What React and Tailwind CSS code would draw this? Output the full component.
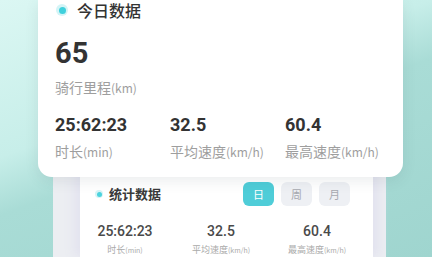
import React from 'react';

const num = { fontFamily: 'Roboto, "Noto Sans", sans-serif' };
const cjk = { fontFamily: '"Noto Sans CJK SC", "Noto Sans", sans-serif' };

const todayStats = [
  { value: '25:62:23', label: '时长', unit: '(min)' },
  { value: '32.5', label: '平均速度', unit: '(km/h)' },
  { value: '60.4', label: '最高速度', unit: '(km/h)' },
];

const Dot = ({ size = 'lg' }) =>
  size === 'lg' ? (
    <span className="flex items-center justify-center w-[12px] h-[12px] rounded-full bg-[#d3f4f6]">
      <span className="w-[7px] h-[7px] rounded-full bg-[#3fd0dc]" />
    </span>
  ) : (
    <span className="flex items-center justify-center w-[8px] h-[8px] rounded-full bg-[#d6f4f6]">
      <span className="w-[5px] h-[5px] rounded-full bg-[#4cd3de]" />
    </span>
  );

export default function App() {
  return (
    <div className="relative w-[432px] h-[257px] overflow-hidden bg-[linear-gradient(160deg,#dbf7f3_0%,#c7eee9_38%,#a9dcd6_52%,#9fd5cf_100%)]">
      {/* phone behind */}
      <div className="ml-[53px] w-[333px] h-full flex bg-[#eceef2]">
        <div className="ml-[27px] w-[293px] h-full bg-white shadow-[-6px_0_10px_#e3e3ef,6px_0_10px_#e3e3ef] pt-[182px]">
          <div className="flex items-center justify-between h-[24px] pl-[15px] pr-[23px]">
            <div className="flex items-center gap-[6px]">
              <Dot size="sm" />
              <span className="text-[13px] leading-[18px] font-bold text-[#3a3a3a]" style={cjk}>统计数据</span>
            </div>
            <div className="flex gap-[7px]" style={cjk}>
              <span className="w-[31px] h-[24px] rounded-[6px] bg-[#4fcdd8] text-white text-[11px] flex items-center justify-center">日</span>
              <span className="w-[31px] h-[24px] rounded-[6px] bg-[#eef0f4] text-[#a7a9b0] text-[11px] flex items-center justify-center">周</span>
              <span className="w-[31px] h-[24px] rounded-[6px] bg-[#eef0f4] text-[#a7a9b0] text-[11px] flex items-center justify-center">月</span>
            </div>
          </div>
          <div className="grid grid-cols-3 w-[288px] -ml-[3px] mt-[16px]">
            {todayStats.map((s) => (
              <div key={s.label} className="flex flex-col items-center">
                <span className="text-[14px] leading-[18px] font-medium text-[#4a4a4a]" style={num}>{s.value}</span>
                <span className="mt-[4px] text-[9px] leading-[12px] text-[#aaaaaa]" style={cjk}>
                  {s.label}<span className="text-[7px]">{s.unit}</span>
                </span>
              </div>
            ))}
          </div>
        </div>
      </div>

      {/* front card */}
      <div className="absolute left-[38px] top-0 w-[365px] h-[177px] bg-white rounded-b-[14px] shadow-[0_4px_14px_rgba(60,80,90,0.10)] pl-[17px]">
        <div className="flex items-center h-[20px] gap-[9px]">
          <span className="ml-[1px]"><Dot /></span>
          <span className="text-[16px] leading-[20px] font-medium text-[#333333]" style={cjk}>今日数据</span>
        </div>
        <div className="mt-[16px] text-[29px] leading-[34px] font-bold text-[#333333]" style={num}>65</div>
        <div className="mt-[7px] text-[14px] leading-[20px] text-[#9e9e9e]" style={cjk}>
          骑行里程<span className="text-[12px]">(km)</span>
        </div>
        <div className="grid grid-cols-3 w-[345px] mt-[16px]">
          {todayStats.map((s) => (
            <div key={s.label} className="flex flex-col">
              <span className="text-[18px] leading-[22px] font-bold text-[#333333]" style={num}>{s.value}</span>
              <span className="mt-[5px] text-[14px] leading-[20px] text-[#9e9e9e]" style={cjk}>
                {s.label}<span className="text-[12px]">{s.unit}</span>
              </span>
            </div>
          ))}
        </div>
      </div>
    </div>
  );
}
